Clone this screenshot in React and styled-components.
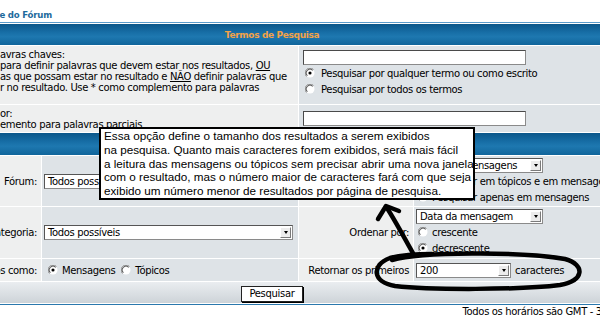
import React from 'react';
import styled, { createGlobalStyle } from 'styled-components';

const GlobalStyle = createGlobalStyle`
  html, body { margin: 0; padding: 0; background: #ffffff; }
  body { overflow: hidden; }
`;

const Viewport = styled.div`
  position: relative;
  width: 600px;
  height: 317px;
  overflow: hidden;
  background: #ffffff;
  font-family: "DejaVu Sans", Verdana, sans-serif;
  font-size: 10px;
  letter-spacing: -0.35px;
  color: #000;
`;

const Sheet = styled.div`
  margin-left: -130px;
  width: 804px;
`;

const NavBar = styled.div`
  height: 22px;
  width: 182px;
  display: flex;
  justify-content: flex-end;
  align-items: center;
`;

const NavLink = styled.a`
  padding-top: 8px;
  font-weight: bold;
  font-size: 8.6px;
  letter-spacing: -0.2px;
  color: #1d6a9c;
  text-decoration: none;
`;

const Forumline = styled.div`
  display: grid;
  grid-template-columns: 169px 256px 114px 1fr;
  grid-template-rows: 21px 58px 27px 22px 50px 51px 22px 21px;
  gap: 1px;
  padding: 1px;
  border: 1px solid #5b9ccc;
  border-bottom-color: #2a78ad;
  background: #ffffff;
`;

const HeadCell = styled.div`
  grid-column: span 4;
  display: flex;
  align-items: center;
  justify-content: center;
  background: linear-gradient(to bottom, #0b578a 0%, #176ea6 40%, #1e78b0 60%, #10659b 100%);
  color: #f2a247;
  font-weight: bold;
  font-size: 9px;
  letter-spacing: -0.35px;
`;

const Cell = styled.div`
  grid-column: span ${(p) => p.$span || 1};
  background: ${(p) => (p.$tone === 'light' ? '#eeefef' : '#dee3e7')};
  display: flex;
  flex-direction: column;
  justify-content: ${(p) => p.$valign || 'center'};
  align-items: ${(p) => (p.$right ? 'flex-end' : 'flex-start')};
  padding: ${(p) => p.$pad || '0 2px'};
  min-width: 0;
  overflow: hidden;
  white-space: nowrap;
`;

const TextLine = styled.div`
  line-height: 11px;
  white-space: nowrap;
`;

const Label = styled.span`
  padding-right: 1px;
`;

const Under = styled.span`
  text-decoration: underline;
`;

const TextInput = styled.div`
  width: 223px;
  height: 15px;
  box-sizing: border-box;
  background: #fff;
  border: 1px solid #8a8a8a;
  border-top-color: #4a4a4a;
  border-left-color: #4a4a4a;
`;

const OptionLine = styled.div`
  display: flex;
  align-items: center;
  height: 16px;
  gap: ${(p) => p.$gap || 4}px;
`;

const RadioSvg = styled.svg`
  flex: none;
  display: block;
  margin-left: 2px;
`;

const Radio = ({ checked }) => (
  <RadioSvg viewBox="0 0 12 12" width="10" height="10">
    <circle cx="6" cy="6" r="5.4" fill="#ffffff" />
    <path d="M10.2 1.8 A5.6 5.6 0 0 0 1.8 10.2" stroke="#8a8a8a" strokeWidth="1.1" fill="none" />
    <path d="M9.3 2.7 A4.4 4.4 0 0 0 2.7 9.3" stroke="#3a3a3a" strokeWidth="1.1" fill="none" />
    {checked && <circle cx="6" cy="6" r="1.9" fill="#000" />}
  </RadioSvg>
);

const SelectBox = styled.div`
  width: ${(p) => p.$w}px;
  height: 15px;
  box-sizing: border-box;
  display: flex;
  align-items: center;
  background: #fff;
  border: 1px solid #8a8a8a;
  border-top-color: #555;
  border-left-color: #555;
`;

const SelectText = styled.span`
  flex: 1;
  padding-left: 3px;
  overflow: hidden;
  white-space: nowrap;
`;

const SelectArrow = styled.span`
  flex: none;
  width: 11px;
  height: 11px;
  box-sizing: border-box;
  margin-right: 1px;
  display: flex;
  align-items: center;
  justify-content: center;
  background: #ececec;
  border: 1px solid;
  border-color: #ffffff #7a7a7a #7a7a7a #ffffff;
  &::after {
    content: '';
    border-left: 2.5px solid transparent;
    border-right: 2.5px solid transparent;
    border-top: 3px solid #000;
  }
`;

const Select = ({ w, children }) => (
  <SelectBox $w={w}>
    <SelectText>{children}</SelectText>
    <SelectArrow />
  </SelectBox>
);

const InlineGroup = styled.div`
  display: flex;
  align-items: center;
  gap: 4px;
`;

const BottomBar = styled.div`
  grid-column: span 4;
  display: flex;
  align-items: center;
  justify-content: center;
  background: linear-gradient(to bottom, #eaedf0 0%, #d9dee2 60%, #cdd3d8 100%);
`;

const SubmitButton = styled.button`
  width: 62px;
  height: 16px;
  padding: 0;
  margin-top: 2px;
  background: #fff;
  border: 1px solid #222;
  box-shadow: 1px 1px 0 #000;
  font-family: inherit;
  font-size: 10px;
  letter-spacing: -0.3px;
  color: #000;
`;

const Footer = styled.div`
  padding: 1px 42px 0 0;
  text-align: right;
  line-height: 11px;
  white-space: nowrap;
`;

const Tooltip = styled.div`
  position: absolute;
  left: 99px;
  top: 127px;
  width: 376px;
  box-sizing: border-box;
  padding: 0 3px;
  background: #fff;
  border: 2px solid #000;
  font-family: "Liberation Sans", Arial, sans-serif;
  font-size: 11.7px;
  letter-spacing: 0;
  line-height: 13.8px;
  white-space: nowrap;
  color: #000;
`;

const Scribble = styled.svg`
  position: absolute;
  left: 0;
  top: 0;
  pointer-events: none;
`;

export default function App() {
  return (
    <>
      <GlobalStyle />
      <Viewport>
        <Sheet>
          <NavBar>
            <NavLink href="#">Índice do Fórum</NavLink>
          </NavBar>
          <Forumline>
            <HeadCell>Termos de Pesquisa</HeadCell>

            <Cell $span={2} $tone="light" $valign="flex-start" $pad="3px 0 0 128px">
              <TextLine>avras chaves:</TextLine>
              <TextLine>para definir palavras que devem estar nos resultados, <Under>OU</Under></TextLine>
              <TextLine>as que possam estar no resultado e <Under>NÃO</Under> definir palavras que</TextLine>
              <TextLine>r no resultado. Use * como complemento para palavras</TextLine>
            </Cell>
            <Cell $span={2} $valign="flex-start" $pad="4px 4px 0 4px">
              <TextInput />
              <OptionLine $gap={6}><Radio checked />Pesquisar por qualquer termo ou como escrito</OptionLine>
              <OptionLine $gap={6}><Radio />Pesquisar por todos os termos</OptionLine>
            </Cell>

            <Cell $span={2} $tone="light" $pad="0 0 0 128px">
              <TextLine>or:</TextLine>
              <TextLine>emento para palavras parciais</TextLine>
            </Cell>
            <Cell $span={2} $pad="0 4px">
              <TextInput />
            </Cell>

            <HeadCell>Opções de Pesquisa</HeadCell>

            <Cell $tone="light" $right $pad="0 3px 0 0"><Label>Fórum:</Label></Cell>
            <Cell $pad="0 2px"><Select w={249}>Todos possíveis</Select></Cell>
            <Cell $tone="light" $right $pad="0 3px 0 0"><Label>Pesquisar em:</Label></Cell>
            <Cell $valign="flex-start" $pad="2px 2px 0 2px">
              <Select w={127}>Todas as mensagens</Select>
              <OptionLine><Radio checked />Pesquisar em tópicos e em mensagens</OptionLine>
              <OptionLine><Radio />Pesquisar apenas em mensagens</OptionLine>
            </Cell>

            <Cell $tone="light" $right $pad="0 3px 0 0"><Label>Categoria:</Label></Cell>
            <Cell $pad="0 2px"><Select w={249}>Todos possíveis</Select></Cell>
            <Cell $tone="light" $right $pad="0 3px 0 0"><Label>Ordenar por:</Label></Cell>
            <Cell $valign="flex-start" $pad="2px 2px 0 2px">
              <Select w={127}>Data da mensagem</Select>
              <OptionLine><Radio />crescente</OptionLine>
              <OptionLine><Radio checked />decrescente</OptionLine>
            </Cell>

            <Cell $tone="light" $right $pad="0 3px 0 0"><Label>Mostrar resultados como:</Label></Cell>
            <Cell $pad="0 4px">
              <InlineGroup>
                <OptionLine><Radio checked />Mensagens</OptionLine>
                <OptionLine><Radio />Tópicos</OptionLine>
              </InlineGroup>
            </Cell>
            <Cell $tone="light" $right $pad="0 3px 0 0"><Label>Retornar os primeiros</Label></Cell>
            <Cell $pad="0 2px">
              <InlineGroup>
                <Select w={95}>200</Select>
                <span>caracteres</span>
              </InlineGroup>
            </Cell>

            <BottomBar>
              <SubmitButton type="button">Pesquisar</SubmitButton>
            </BottomBar>
          </Forumline>
          <Footer>Todos os horários são GMT - 3 Horas</Footer>
        </Sheet>

        <Tooltip>
          Essa opção define o tamanho dos resultados a serem exibidos<br />
          na pesquisa. Quanto mais caracteres forem exibidos, será mais fácil<br />
          a leitura das mensagens ou tópicos sem precisar abrir uma nova janela<br />
          com o resultado, mas o número maior de caracteres fará com que seja<br />
          exibido um número menor de resultados por página de pesquisa.
        </Tooltip>

        <Scribble width="600" height="317" viewBox="0 0 600 317">
          <g fill="none" stroke="#000" strokeWidth="4.5" strokeLinecap="round" strokeLinejoin="round">
            <path d="M 392 260 C 420 252, 520 251, 565 259 C 586 265, 584 281, 560 285 C 520 290, 430 290, 395 286 C 372 282, 371 265, 390 258 C 402 255, 418 254, 432 254" />
            <path d="M 414 255 C 406 241, 396 222, 387 208" />
            <path d="M 378 219 L 386 206 L 399 211" />
          </g>
        </Scribble>
      </Viewport>
    </>
  );
}
